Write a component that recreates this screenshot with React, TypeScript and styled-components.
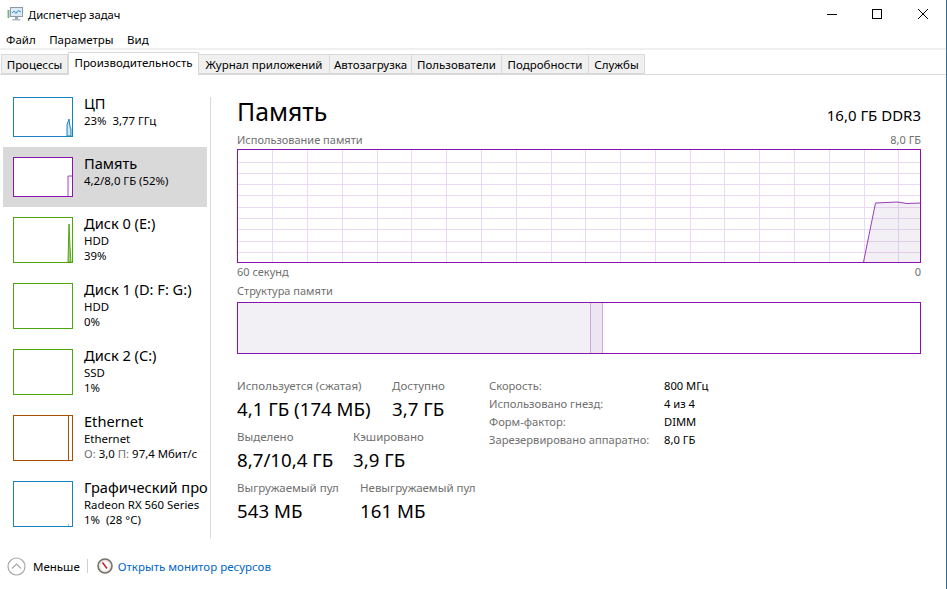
import styled, { createGlobalStyle } from "styled-components"

const GlobalStyle = createGlobalStyle`
  html, body {
    margin: 0;
    padding: 0;
    height: 100%;
    overflow: hidden;
    background: #fff;
  }
  #root {
    height: 100%;
  }
`

const FONT = `"Noto Sans", "Open Sans", "Liberation Sans", sans-serif`

const Win = styled.div`
  width: 947px;
  height: 589px;
  box-sizing: border-box;
  border-right: 1px solid #2f6d94;
  font-family: ${FONT};
  font-size: 11.5px;
  color: #000;
  display: flex;
  flex-direction: column;
  overflow: hidden;
`

const TitleBar = styled.div`
  height: 30px;
  box-sizing: border-box;
  display: flex;
  align-items: center;
  padding: 0 0 2px 7px;
`

const Title = styled.span`
  margin-left: 5px;
  font-size: 11.2px;
  flex: 1;
`

const WinButton = styled.div<{ $w: number }>`
  width: ${(p) => p.$w}px;
  height: 28px;
  display: flex;
  align-items: center;
  justify-content: center;
`

const Menu = styled.div`
  height: 18px;
  display: flex;
  align-items: center;
  padding-left: 6px;
  gap: 13.5px;
  border-bottom: 2px solid #f0f0f0;
`

const Tabs = styled.div`
  height: 24px;
  display: flex;
  align-items: flex-end;
  padding-left: 1px;
  border-bottom: 1px solid #d9d9d9;
`

const Tab = styled.div<{ $w: number; $active?: boolean }>`
  width: ${(p) => p.$w}px;
  box-sizing: border-box;
  height: ${(p) => (p.$active ? 23 : 20)}px;
  margin-bottom: ${(p) => (p.$active ? -1 : 0)}px;
  padding-bottom: ${(p) => (p.$active ? 4 : 0)}px;
  display: flex;
  align-items: center;
  justify-content: center;
  white-space: nowrap;
  background: ${(p) => (p.$active ? "#fff" : "#f0f0f0")};
  border: 1px solid #d9d9d9;
  border-bottom: ${(p) => (p.$active ? "none" : "1px solid #d9d9d9")};
  border-left: ${(p) => (p.$active ? "1px solid #d9d9d9" : "none")};
  &:first-child {
    border-left: 1px solid #d9d9d9;
  }
`

const Body = styled.div`
  flex: 1;
  display: flex;
  min-height: 0;
`

const Sidebar = styled.div`
  width: 204px;
  margin: 12px 0 0 3px;
  display: flex;
  flex-direction: column;
`

const Item = styled.div<{ $h: number; $selected?: boolean }>`
  height: ${(p) => p.$h}px;
  background: ${(p) => (p.$selected ? "#d9d9d9" : "transparent")};
  display: flex;
  align-items: flex-start;
  padding: 10px 0 0 10px;
  box-sizing: border-box;
`

const Thumb = styled.svg`
  display: block;
  flex: none;
`

const ItemText = styled.div`
  margin-left: 11px;
  margin-top: -3px;
  white-space: pre;
  font-size: 11.4px;
  line-height: 15px;
`

const ItemName = styled.div`
  font-size: 14.6px;
  line-height: 19px;
`

const Muted = styled.span`
  color: #707070;
`

const Divider = styled.div`
  width: 1px;
  height: 441px;
  margin: 22px 0 0 3px;
  background: #d9d9d9;
`

const Panel = styled.div`
  width: 684px;
  margin-left: 26px;
  display: flex;
  flex-direction: column;
`

const Header = styled.div`
  height: 56px;
  display: flex;
  justify-content: space-between;
  align-items: flex-end;
`

const Heading = styled.div`
  font-size: 24.8px;
  line-height: 34px;
  margin-bottom: 3px;
`

const Spec = styled.div`
  font-size: 15px;
  line-height: 20px;
  margin-bottom: 6px;
`

const CaptionRow = styled.div<{ $h: number; $lift?: number }>`
  height: ${(p) => p.$h}px;
  box-sizing: border-box;
  padding-bottom: ${(p) => p.$lift ?? 2}px;
  display: flex;
  justify-content: space-between;
  align-items: center;
  color: #707070;
  font-size: 11px;
`

const Chart = styled.svg`
  display: block;
`

const Composition = styled.div`
  height: 52px;
  box-sizing: border-box;
  border: 1px solid #8b12ae;
  display: flex;
`

const InUse = styled.div`
  width: 352px;
  background: #f2f0f4;
`

const Modified = styled.div`
  width: 13px;
  box-sizing: border-box;
  background: #ede5f2;
  border-left: 1px solid #cfa6e0;
  border-right: 1px solid #cfa6e0;
`

const Details = styled.div`
  margin-top: 22px;
  display: flex;
`

const Stats = styled.div`
  width: 252px;
  padding-top: 1px;
`

const StatRow = styled.div`
  height: 51px;
  display: flex;
`

const Stat = styled.div<{ $w?: number }>`
  width: ${(p) => (p.$w ? `${p.$w}px` : "auto")};
  white-space: nowrap;
`

const StatLabel = styled.div`
  color: #707070;
  font-size: 11.5px;
  line-height: 18px;
`

const StatValue = styled.div`
  font-size: 18.7px;
  line-height: 28px;
`

const Table = styled.div`
  display: grid;
  grid-template-columns: 175px auto;
  grid-auto-rows: 18px;
  align-items: center;
  align-self: flex-start;
  white-space: nowrap;
  font-size: 11.2px;
`

const Footer = styled.div`
  height: 52px;
  display: flex;
  align-items: center;
  padding: 6px 0 0 7px;
  box-sizing: border-box;
`

const FooterLabel = styled.span`
  margin-left: 7px;
`

const FooterSep = styled.div`
  width: 1px;
  height: 14px;
  margin: 0 9px 0 7px;
  background: #d0d0d0;
`

const ResLink = styled.a`
  margin-left: 5px;
  color: #0066cc;
  text-decoration: none;
`

type Proc = {
  name: string
  color: string
  h: number
  selected?: boolean
  lines: React.ReactNode[]
  spark?: React.ReactNode
}

const procs: Proc[] = [
  {
    name: "ЦП",
    color: "#1a82c0",
    h: 60,
    lines: ["23%  3,77 ГГц"],
    spark: <path d="M54 39V28L56 22L57 30L58 32V39Z" fill="#cfe5f2" stroke="#1a82c0" strokeWidth="1" />
  },
  {
    name: "Память",
    color: "#8b12ae",
    h: 60,
    selected: true,
    lines: ["4,2/8,0 ГБ (52%)"],
    spark: <path d="M55 39V19H59" fill="#f2f0f4" stroke="#a64cc4" strokeWidth="1" />
  },
  {
    name: "Диск 0 (E:)",
    color: "#4da60c",
    h: 66,
    lines: ["HDD", "39%"],
    spark: <path d="M55 45L56 7L57 30L58 45Z" fill="#a5d27f" stroke="#4da60c" strokeWidth="1" />
  },
  { name: "Диск 1 (D: F: G:)", color: "#4da60c", h: 66, lines: ["HDD", "0%"] },
  { name: "Диск 2 (C:)", color: "#4da60c", h: 66, lines: ["SSD", "1%"] },
  {
    name: "Ethernet",
    color: "#a74f01",
    h: 66,
    lines: [
      "Ethernet",
      <>
        <Muted>О:</Muted> 3,0 <Muted>П:</Muted> 97,4 Мбит/с
      </>
    ],
    spark: <path d="M55.5 0V46" fill="none" stroke="#a74f01" strokeWidth="1" />
  },
  {
    name: "Графический про",
    color: "#1a82c0",
    h: 66,
    lines: ["Radeon RX 560 Series", "1%  (28 °C)"],
    spark: <path d="M55 44h1" stroke="#1a82c0" strokeWidth="1" />
  }
]

function Sparkline({ p }: { p: Proc }) {
  const height = p.h === 60 ? 40 : 46
  return (
    <Thumb width="60" height={height} viewBox={`0 0 60 ${height}`}>
      <rect x="0" y="0" width="60" height={height} fill="#fff" />
      {p.spark}
      <rect x="0.5" y="0.5" width="59" height={height - 1} fill="none" stroke={p.color} />
    </Thumb>
  )
}

function UsageChart() {
  const vLines = Array.from({ length: 19 }, (_, i) => 35.3 + i * 34.78)
  const hLines = Array.from({ length: 9 }, (_, i) => 12.5 + i * 11.3)
  const purple = "#8b12ae"
  const area = "M626.5 113L638.5 54L660 53L670 54.5L684 54V113Z"
  return (
    <Chart width="684" height="114" viewBox="0 0 684 114">
      {vLines.map((x) => (
        <line key={x} x1={Math.round(x) + 0.5} x2={Math.round(x) + 0.5} y1="0" y2="114" stroke="#ecd9f4" />
      ))}
      {hLines.map((y) => (
        <line key={y} x1="0" x2="684" y1={Math.round(y) + 0.5} y2={Math.round(y) + 0.5} stroke="#ecd9f4" />
      ))}
      <path d={area} fill="#6e5a80" fillOpacity="0.09" />
      <path d="M626.5 113L638.5 54L660 53L670 54.5L684 54" fill="none" stroke="#9a3dbc" strokeWidth="1" />
      <rect x="0.5" y="0.5" width="683" height="113" fill="none" stroke={purple} />
    </Chart>
  )
}

export default function App() {
  return (
    <Win>
      <GlobalStyle />
      <TitleBar>
        <svg width="16" height="16" viewBox="0 0 16 16">
          <rect x="0.5" y="4" width="2" height="8" fill="#7fb08a" />
          <rect x="3.5" y="1.5" width="12" height="9" fill="#dcebf5" stroke="#8a9aa6" />
          <path d="M5 7L7 5L9 7.5L11 4.5L14 6" fill="none" stroke="#3a8fc8" />
          <rect x="8" y="11" width="3" height="2" fill="#9aa4ac" />
          <rect x="5.5" y="13" width="8" height="1.5" fill="#b0b8be" />
        </svg>
        <Title>Диспетчер задач</Title>
        <WinButton $w={44}>
          <svg width="10" height="10" viewBox="0 0 10 10">
            <path d="M0 5.5H10" stroke="#000" />
          </svg>
        </WinButton>
        <WinButton $w={46}>
          <svg width="10" height="10" viewBox="0 0 10 10">
            <rect x="0.5" y="0.5" width="9" height="9" fill="none" stroke="#000" />
          </svg>
        </WinButton>
        <WinButton $w={46}>
          <svg width="10" height="10" viewBox="0 0 10 10">
            <path d="M0 0L10 10M10 0L0 10" stroke="#000" strokeWidth="1" />
          </svg>
        </WinButton>
      </TitleBar>
      <Menu>
        <span>Файл</span>
        <span>Параметры</span>
        <span>Вид</span>
      </Menu>
      <Tabs>
        <Tab $w={67}>Процессы</Tab>
        <Tab $w={131} $active>
          Производительность
        </Tab>
        <Tab $w={131}>Журнал приложений</Tab>
        <Tab $w={82}>Автозагрузка</Tab>
        <Tab $w={90}>Пользователи</Tab>
        <Tab $w={87}>Подробности</Tab>
        <Tab $w={56}>Службы</Tab>
      </Tabs>
      <Body>
        <Sidebar>
          {procs.map((p) => (
            <Item key={p.name} $h={p.h} $selected={p.selected}>
              <Sparkline p={p} />
              <ItemText>
                <ItemName>{p.name}</ItemName>
                {p.lines.map((line, i) => (
                  <div key={i}>{line}</div>
                ))}
              </ItemText>
            </Item>
          ))}
        </Sidebar>
        <Divider />
        <Panel>
          <Header>
            <Heading>Память</Heading>
            <Spec>16,0 ГБ DDR3</Spec>
          </Header>
          <CaptionRow $h={18}>
            <span>Использование памяти</span>
            <span>8,0 ГБ</span>
          </CaptionRow>
          <UsageChart />
          <CaptionRow $h={19}>
            <span>60 секунд</span>
            <span>0</span>
          </CaptionRow>
          <CaptionRow $h={20} $lift={4}>
            <span>Структура памяти</span>
          </CaptionRow>
          <Composition>
            <InUse />
            <Modified />
          </Composition>
          <Details>
            <Stats>
              <StatRow>
                <Stat $w={155}>
                  <StatLabel>Используется (сжатая)</StatLabel>
                  <StatValue>4,1 ГБ (174 МБ)</StatValue>
                </Stat>
                <Stat>
                  <StatLabel>Доступно</StatLabel>
                  <StatValue>3,7 ГБ</StatValue>
                </Stat>
              </StatRow>
              <StatRow>
                <Stat $w={116}>
                  <StatLabel>Выделено</StatLabel>
                  <StatValue>8,7/10,4 ГБ</StatValue>
                </Stat>
                <Stat>
                  <StatLabel>Кэшировано</StatLabel>
                  <StatValue>3,9 ГБ</StatValue>
                </Stat>
              </StatRow>
              <StatRow>
                <Stat $w={123}>
                  <StatLabel>Выгружаемый пул</StatLabel>
                  <StatValue>543 МБ</StatValue>
                </Stat>
                <Stat>
                  <StatLabel>Невыгружаемый пул</StatLabel>
                  <StatValue>161 МБ</StatValue>
                </Stat>
              </StatRow>
            </Stats>
            <Table>
              <Muted>Скорость:</Muted>
              <span>800 МГц</span>
              <Muted>Использовано гнезд:</Muted>
              <span>4 из 4</span>
              <Muted>Форм-фактор:</Muted>
              <span>DIMM</span>
              <Muted>Зарезервировано аппаратно:</Muted>
              <span>8,0 ГБ</span>
            </Table>
          </Details>
        </Panel>
      </Body>
      <Footer>
        <svg width="19" height="19" viewBox="0 0 19 19">
          <circle cx="9.5" cy="9.5" r="8.5" fill="#fff" stroke="#a8a8a8" strokeWidth="1.2" />
          <path d="M5 11.5L9.5 7L14 11.5" fill="none" stroke="#a8a8a8" strokeWidth="1.2" />
        </svg>
        <FooterLabel>Меньше</FooterLabel>
        <FooterSep />
        <svg width="16" height="16" viewBox="0 0 16 16">
          <circle cx="8" cy="8" r="7" fill="#e8e4e0" stroke="#77706a" strokeWidth="1.6" />
          <circle cx="8" cy="8" r="4.5" fill="#fff" />
          <path d="M5.5 4.5L10 10.5" stroke="#c8202a" strokeWidth="1.6" />
        </svg>
        <ResLink>Открыть монитор ресурсов</ResLink>
      </Footer>
    </Win>
  )
}
